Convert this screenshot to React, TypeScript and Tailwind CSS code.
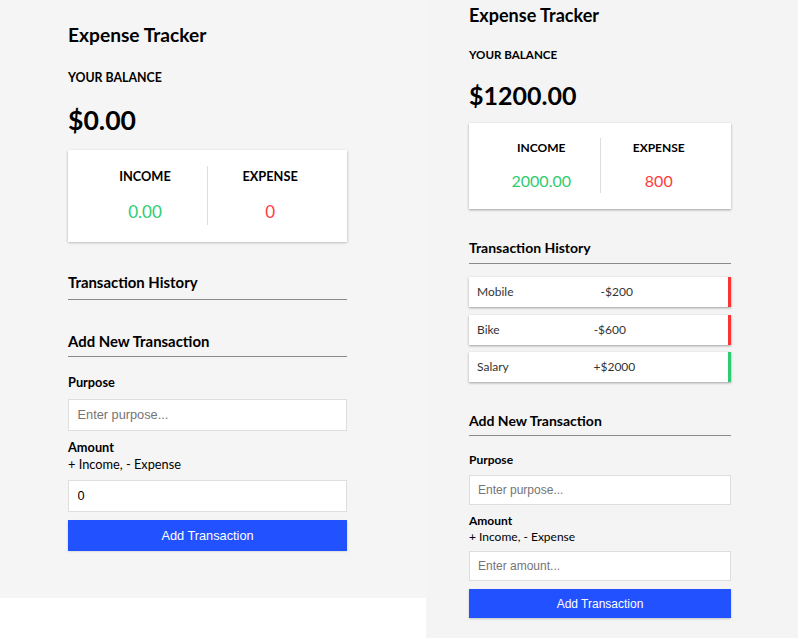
type Txn = { id: number; text: string; amount: number };

const history: Txn[] = [
  { id: 1, text: "Mobile", amount: -200 },
  { id: 2, text: "Bike", amount: -600 },
  { id: 3, text: "Salary", amount: 2000 },
];

const Tracker = ({
  balance,
  income,
  expense,
  items,
  amount,
}: {
  balance: string;
  income: string;
  expense: string;
  items: Txn[];
  amount?: string;
}) => {
  return (
    <div className="w-[262px] pt-[3px] font-['Lato',sans-serif] text-black">
      <h2 className="text-[18px] leading-[24px] font-bold">Expense Tracker</h2>
      <h4 className="mt-[20px] text-[11.6px] leading-[16px] font-bold uppercase">
        Your Balance
      </h4>
      <h1 className="mt-[16px] text-[25px] leading-[32px] font-bold">{balance}</h1>

      <div className="mt-[12px] flex bg-white px-[14px] pt-[15px] pb-[16px] shadow-[0_1px_3px_rgba(0,0,0,0.12),0_1px_2px_rgba(0,0,0,0.24)]">
        <div className="flex-1 pb-[2px] text-center">
          <h4 className="text-[12px] leading-[20px] font-bold">INCOME</h4>
          <p className="mt-[13px] text-[16px] leading-[20px] text-[#2ecc71]">{income}</p>
        </div>
        <div className="flex-1 border-l border-[#dddddd] pb-[2px] text-center">
          <h4 className="text-[12px] leading-[20px] font-bold">EXPENSE</h4>
          <p className="mt-[13px] text-[16px] leading-[20px] text-[#ff3b3b]">{expense}</p>
        </div>
      </div>

      <h3 className="mt-[29px] border-b border-[#8a8a8a] pb-[5px] text-[14px] leading-[20px] font-bold">
        Transaction History
      </h3>
      {items.length > 0 && (
        <ul className="mt-[13px] flex flex-col gap-[7.5px]">
          {items.map((t) => (
            <li
              key={t.id}
              className={`flex h-[30px] items-center justify-between border-r-[3px] bg-white pl-[8px] pr-[8px] text-[12px] text-[#333] shadow-[0_1px_3px_rgba(0,0,0,0.12),0_1px_2px_rgba(0,0,0,0.24)] ${
                t.amount < 0 ? "border-[#ff3333]" : "border-[#2ecc71]"
              }`}
            >
              <span>{t.text}</span>
              <span>
                {t.amount < 0 ? "-" : "+"}${Math.abs(t.amount)}
              </span>
              <span />
            </li>
          ))}
        </ul>
      )}

      <h3 className="mt-[29px] border-b border-[#8a8a8a] pb-[4px] text-[14px] leading-[20px] font-bold">
        Add New Transaction
      </h3>
      <form>
        <label className="mt-[16px] block text-[12px] leading-[16px] font-bold">Purpose</label>
        <input
          type="text"
          placeholder="Enter purpose..."
          className="mt-[7px] block h-[30px] w-full border border-[#dedede] bg-white px-[8px] font-['Liberation_Sans',Arial,sans-serif] text-[12px] placeholder:text-[#757575] outline-none"
        />
        <label className="mt-[8px] block text-[12px] leading-[16px] font-bold">Amount</label>
        <p className="text-[12px] leading-[16px]">+ Income, - Expense</p>
        <input
          type="text"
          placeholder="Enter amount..."
          defaultValue={amount}
          className="mt-[6px] block h-[30px] w-full border border-[#dedede] bg-white px-[8px] font-['Liberation_Sans',Arial,sans-serif] text-[12px] text-black placeholder:text-[#757575] outline-none"
        />
        <button
          type="button"
          className="mt-[8px] block h-[29px] w-full bg-[#2251ff] font-['Liberation_Sans',Arial,sans-serif] text-[12px] text-white shadow-[0_1px_2px_rgba(0,0,0,0.2)]"
        >
          Add Transaction
        </button>
      </form>
    </div>
  );
};

export default function App() {
  return (
    <div className="flex h-[638px] w-[798px] overflow-hidden">
      <div className="flex w-[426px] flex-col">
        <div className="h-[598px] bg-[#f5f5f5] pl-[68px] pt-[19px]">
          <div className="[zoom:1.065]">
            <Tracker balance="$0.00" income="0.00" expense="0" items={[]} amount="0" />
          </div>
        </div>
        <div className="flex-1 bg-white" />
      </div>
      <div className="flex-1 bg-[#f4f4f4] pl-[43px]">
        <Tracker balance="$1200.00" income="2000.00" expense="800" items={history} />
      </div>
    </div>
  );
}
